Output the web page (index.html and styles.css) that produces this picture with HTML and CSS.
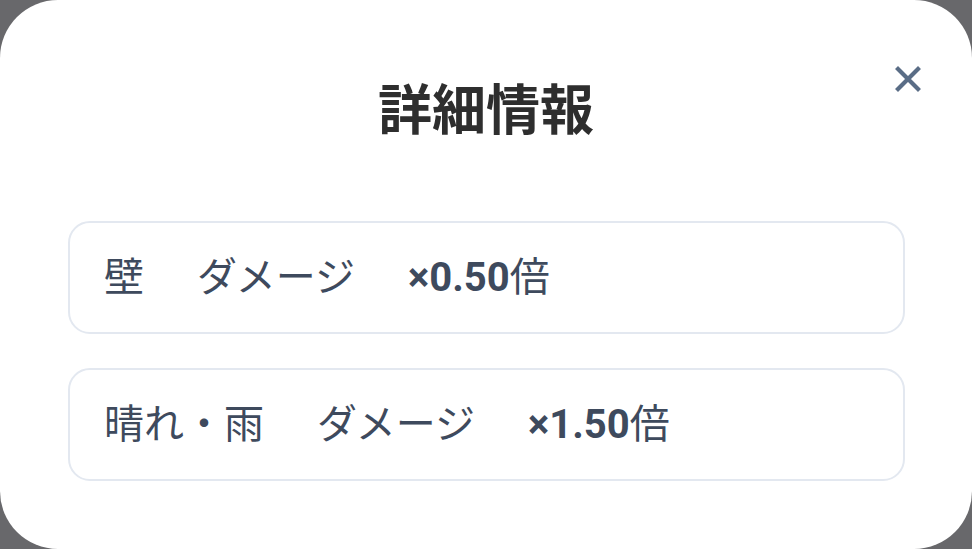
FILE: index.html
```html
<!DOCTYPE html>
<html lang="ja">
<head>
<meta charset="utf-8">
<link rel="stylesheet" href="styles.css">
</head>
<body>
<div class="modal">
  <h1 class="title">詳細情報</h1>
  <button class="close" aria-label="閉じる">
    <svg width="28" height="28" viewBox="0 0 28 28"><path d="M4 4 L24 24 M24 4 L4 24" stroke="#5a6d86" stroke-width="4.2" stroke-linecap="square" fill="none"/></svg>
  </button>
  <div class="list">
    <div class="card"><span>壁</span><span>ダメージ</span><span class="val"><b class="num">×0.50</b>倍</span></div>
    <div class="card"><span>晴れ・雨</span><span>ダメージ</span><span class="val"><b class="num">×1.50</b>倍</span></div>
  </div>
</div>
</body>
</html>
```
FILE: styles.css
```css
html, body {
  margin: 0;
  padding: 0;
  background: #68686b;
}
body {
  width: 972px;
  height: 549px;
  overflow: hidden;
  font-family: Roboto, "Noto Sans CJK JP", sans-serif;
}
.modal {
  position: relative;
  box-sizing: border-box;
  width: 972px;
  height: 549px;
  background: #ffffff;
  border-radius: 58px;
  padding-top: 80px;
}
.title {
  margin: 0;
  text-align: center;
  font-family: "Noto Sans CJK JP", sans-serif;
  font-size: 54px;
  line-height: 54px;
  font-weight: 700;
  color: #2e2e2e;
}
.close {
  position: absolute;
  left: 894px;
  top: 65px;
  width: 28px;
  height: 28px;
  padding: 0;
  border: 0;
  background: none;
  display: flex;
}
.list {
  display: flex;
  flex-direction: column;
  gap: 34px;
  margin: 87px 67px 0 68px;
}
.card {
  display: flex;
  align-items: center;
  gap: 53px;
  height: 113px;
  box-sizing: border-box;
  padding: 0 34px;
  border: 2px solid #e3e8f0;
  border-radius: 22px;
  font-size: 40px;
  line-height: 40px;
  color: #3e4a5d;
}
.val {
  font-weight: 400;
}
.num {
  font-weight: 700;
}
```
